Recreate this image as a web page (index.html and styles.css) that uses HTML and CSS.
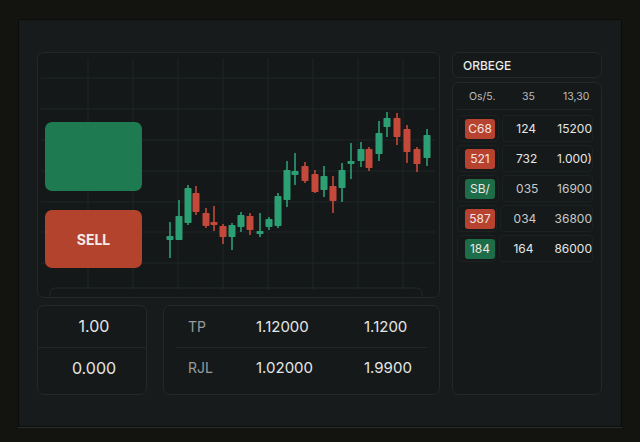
FILE: index.html
```html
<html>

<head>
	<link rel="stylesheet" href="styles.css">
</head>

<body>
	<div id="panel">
		<div id="left-col">
			<div id="chart" class="card">
				<svg id="chart-svg" width="403" height="246" viewBox="37 52 403 246">
					<g class="grid">
						<line x1="41" y1="78" x2="435" y2="78" />
						<line x1="41" y1="109" x2="435" y2="109" />
						<line x1="41" y1="140" x2="435" y2="140" />
						<line x1="41" y1="171" x2="435" y2="171" />
						<line x1="41" y1="202" x2="435" y2="202" />
						<line x1="41" y1="232" x2="435" y2="232" />
						<line x1="41" y1="263" x2="435" y2="263" />
						<line x1="88" y1="58" x2="88" y2="290" />
						<line x1="133" y1="58" x2="133" y2="290" />
						<line x1="178" y1="58" x2="178" y2="290" />
						<line x1="223" y1="58" x2="223" y2="290" />
						<line x1="268" y1="58" x2="268" y2="290" />
						<line x1="313" y1="58" x2="313" y2="290" />
						<line x1="358" y1="58" x2="358" y2="290" />
						<line x1="403" y1="58" x2="403" y2="290" />
					</g>
					<path class="strip" d="M50 298 V294 Q50 288 56 288 H416 Q422 288 422 294 V298" />
					<g id="candles"></g>
				</svg>
				<div id="trade-buttons">
					<div class="btn buy"></div>
					<div class="btn sell">SELL</div>
				</div>
			</div>
			<div id="bottom-row">
				<div id="lots" class="card">
					<div class="lot-row">1.00</div>
					<div class="lot-row">0.000</div>
				</div>
				<div id="levels" class="card">
					<div class="level-row">
						<span class="level-label">TP</span>
						<span>1.12000</span>
						<span>1.1200</span>
					</div>
					<div class="level-row">
						<span class="level-label">RJL</span>
						<span>1.02000</span>
						<span>1.9900</span>
					</div>
				</div>
			</div>
		</div>
		<div id="book-col">
			<div id="book-title" class="card">ORBEGE</div>
			<div id="book" class="card">
				<div id="book-head">
					<span>Os/5.</span>
					<span>35</span>
					<span>13,30</span>
				</div>
				<div class="book-row">
					<div class="tag-cell"><span class="tag red">C68</span></div>
					<div class="num-cell"><span>124</span><span>15200</span></div>
				</div>
				<div class="book-row">
					<div class="tag-cell"><span class="tag red">521</span></div>
					<div class="num-cell"><span>732</span><span>1.000)</span></div>
				</div>
				<div class="book-row">
					<div class="tag-cell"><span class="tag green">SB/</span></div>
					<div class="num-cell dim"><span>035</span><span>16900</span></div>
				</div>
				<div class="book-row">
					<div class="tag-cell"><span class="tag red">587</span></div>
					<div class="num-cell dim"><span>034</span><span>36800</span></div>
				</div>
				<div class="book-row">
					<div class="tag-cell"><span class="tag green">184</span></div>
					<div class="num-cell"><span>164</span><span>86000</span></div>
				</div>
			</div>
		</div>
	</div>
	<script>
		// x, wick top, wick bottom, body top, body bottom, up?
		const candles = [
			[170, 222, 258, 236, 240, 1], [179, 200, 240, 216, 240, 1], [188, 185, 225, 188, 223, 1],
			[196, 186, 215, 193, 212, 0], [206, 208, 228, 213, 226, 0], [214, 206, 231, 222, 225, 0],
			[223, 224, 244, 226, 237, 0], [232, 223, 250, 225, 237, 1], [241, 212, 232, 215, 227, 1],
			[250, 213, 235, 216, 230, 0], [260, 213, 237, 231, 233, 1], [269, 217, 230, 219, 227, 1],
			[278, 193, 228, 196, 226, 1], [287, 161, 207, 170, 200, 1], [295, 153, 185, 171, 175, 1],
			[305, 162, 183, 166, 181, 0], [315, 170, 193, 174, 192, 0], [324, 166, 197, 176, 190, 1],
			[333, 176, 213, 186, 201, 0], [342, 163, 202, 170, 188, 1], [351, 143, 179, 161, 164, 1],
			[361, 142, 167, 149, 161, 1], [369, 147, 171, 149, 168, 0], [379, 121, 161, 133, 154, 1],
			[387, 112, 137, 118, 127, 1], [397, 113, 145, 118, 137, 0], [407, 125, 163, 129, 152, 0],
			[417, 147, 172, 149, 164, 0], [427, 129, 166, 135, 158, 1]
		];
		const ns = "http://www.w3.org/2000/svg";
		const group = document.getElementById("candles");
		candles.forEach(([x, wt, wb, bt, bb, up]) => {
			const g = document.createElementNS(ns, "g");
			g.setAttribute("class", up ? "up" : "down");
			const wick = document.createElementNS(ns, "line");
			wick.setAttribute("x1", x);
			wick.setAttribute("x2", x);
			wick.setAttribute("y1", wt);
			wick.setAttribute("y2", wb);
			const body = document.createElementNS(ns, "rect");
			body.setAttribute("x", x - 3.5);
			body.setAttribute("y", bt);
			body.setAttribute("width", 7);
			body.setAttribute("height", Math.max(bb - bt, 3));
			body.setAttribute("rx", 0.8);
			g.appendChild(wick);
			g.appendChild(body);
			group.appendChild(g);
		});
	</script>
</body>

</html>
```

FILE: styles.css
```css
body {
	margin: 0;
	width: 640px;
	height: 442px;
	background: #131410;
	color: #e4e6e6;
	font-family: Inter, "Noto Sans", sans-serif;
	overflow: hidden;
}

#panel {
	margin: 19px 18px 0 18px;
	height: 408px;
	box-sizing: border-box;
	padding: 32px 19px 0 18px;
	display: flex;
	gap: 12px;
	background: #181b1b;
	border: 1px solid #0b0c0b;
	box-shadow: 0 1px 0 #2b2e2b;
}

.card {
	box-sizing: border-box;
	border: 1px solid #232828;
	border-radius: 7px;
	background: #161919;
}

#left-col {
	width: 403px;
	display: flex;
	flex-direction: column;
	gap: 7px;
}

#chart {
	position: relative;
	height: 246px;
	background: #151818;
}

#chart-svg {
	position: absolute;
	left: -1px;
	top: -1px;
}

.grid line {
	stroke: #1f2424;
	stroke-width: 1;
}

.strip {
	fill: none;
	stroke: #232828;
	stroke-width: 1;
}

.up line {
	stroke: #2c9f75;
	stroke-width: 1.6;
}

.up rect {
	fill: #2c9f75;
}

.down line {
	stroke: #c4493a;
	stroke-width: 1.6;
}

.down rect {
	fill: #c4493a;
}

#trade-buttons {
	position: relative;
	display: flex;
	flex-direction: column;
	gap: 19px;
	padding: 69px 0 0 7px;
	width: 97px;
}

.btn {
	border-radius: 7px;
	display: flex;
	align-items: center;
	justify-content: center;
	font-weight: 700;
	font-size: 14px;
	color: #f4ece8;
}

.buy {
	height: 69px;
	background: #1d7a51;
}

.sell {
	height: 58px;
	background: #b4432e;
}

#bottom-row {
	display: flex;
	gap: 16px;
	height: 90px;
}

#lots {
	width: 110px;
	padding-bottom: 6px;
	display: flex;
	flex-direction: column;
}

.lot-row {
	flex: 1;
	display: flex;
	align-items: center;
	justify-content: center;
	font-size: 16px;
	padding-left: 4px;
}

.lot-row + .lot-row,
.level-row + .level-row {
	border-top: 1px solid #212626;
}

#levels {
	flex: 1;
	padding: 0 12px 6px 12px;
	display: flex;
	flex-direction: column;
}

.level-row {
	flex: 1;
	display: grid;
	grid-template-columns: 68px 108px 1fr;
	align-items: center;
	padding-left: 12px;
	font-size: 15px;
}

.level-label {
	color: #979c9c;
	font-size: 14px;
}

#book-col {
	width: 150px;
	display: flex;
	flex-direction: column;
	gap: 4px;
}

#book-title {
	height: 26px;
	padding-left: 10px;
	display: flex;
	align-items: center;
	font-size: 12px;
	font-weight: 500;
	color: #e8eaea;
}

#book {
	height: 313px;
	padding: 0 8px 0 4px;
	display: flex;
	flex-direction: column;
	gap: 3px;
}

#book-head {
	height: 26px;
	display: grid;
	grid-template-columns: 53px 41px 1fr;
	align-items: center;
	padding-left: 12px;
	font-size: 10.5px;
	color: #b9bdbd;
	border-bottom: 1px solid #1f2424;
	margin-bottom: 2px;
}

.book-row {
	height: 27px;
	display: flex;
	gap: 3px;
}

.tag-cell {
	width: 43px;
	box-sizing: border-box;
	display: flex;
	align-items: center;
	padding-left: 7px;
	border: 1px solid #1c2121;
	border-radius: 4px;
}

.tag {
	width: 30px;
	height: 20px;
	border-radius: 3px;
	display: flex;
	align-items: center;
	justify-content: center;
	font-size: 12px;
	color: #f2e6e2;
}

.red {
	background: #b6422f;
}

.green {
	background: #1d6d49;
}

.num-cell {
	flex: 1;
	box-sizing: border-box;
	display: grid;
	grid-template-columns: 41px 1fr;
	align-items: center;
	padding-left: 13px;
	font-size: 12px;
	border: 1px solid #1c2121;
	border-radius: 4px;
}

.dim {
	color: #c6caca;
}
```
